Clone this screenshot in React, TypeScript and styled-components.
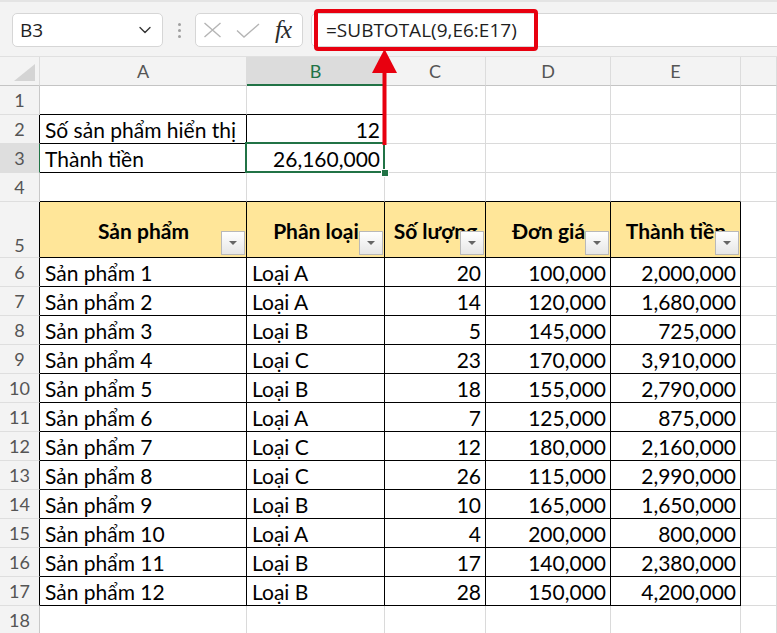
import React from 'react'
import styled, { createGlobalStyle } from 'styled-components'
import { ChevronDown } from 'lucide-react'

const GlobalStyle = createGlobalStyle`
  html, body { margin: 0; padding: 0; background: #fff; }
  body { font-family: Lato, "Liberation Sans", sans-serif; color: #000; }
`

const GRID = '#dadada'
const BLACK = '#000'
const GREEN = '#217346'
const COLS = [40, 207, 138, 101, 125, 130, 36]
const LETTERS = ['A', 'B', 'C', 'D', 'E', '']

const Window = styled.div`
  position: relative;
  width: 777px;
  height: 633px;
  overflow: hidden;
  background: #fff;
`

const FormulaBar = styled.div`
  display: flex;
  align-items: flex-start;
  box-sizing: border-box;
  height: 57px;
  padding: 11px 0 0 12px;
  background: #f3f3f3;
  border-top: 2px solid #e4e4e4;
  border-bottom: 1px solid #e0e0e0;
`

const Field = styled.div<{ $w?: number }>`
  display: flex;
  align-items: center;
  flex: ${p => (p.$w ? 'none' : '1')};
  width: ${p => (p.$w ? `${p.$w}px` : 'auto')};
  height: 34px;
  box-sizing: border-box;
  background: #fff;
  border: 1px solid #d6d6d6;
  border-radius: 5px;
  font-family: "Open Sans", "Noto Sans", sans-serif;
  font-size: 19px;
  color: #1e1e1e;
`

const NameBox = styled(Field)`
  justify-content: space-between;
  padding: 0 7px 0 7px;
`

const Dots = styled.div`
  display: flex;
  flex-direction: column;
  align-items: center;
  justify-content: center;
  gap: 3px;
  width: 32px;
  height: 34px;

  span {
    width: 3px;
    height: 3px;
    border-radius: 50%;
    background: #a0a0a0;
  }
`

const FxBox = styled(Field)`
  padding-left: 7px;
  gap: 14px;
`

const FxLabel = styled.span`
  font-family: "Liberation Serif", "DejaVu Serif", serif;
  font-style: italic;
  font-size: 25px;
  color: #2a2a2a;
  margin-left: 1px;
  letter-spacing: -1px;
`

const FormulaBox = styled(Field)`
  margin-left: 8px;
  margin-right: -12px;
  padding-left: 14px;
`

const Sheet = styled.div`
  display: flex;
  flex-direction: column;
`

const Row = styled.div<{ $h: number }>`
  display: flex;
  height: ${p => p.$h}px;
  flex: none;
`

const ColHead = styled.div<{ $w: number; $selected?: boolean }>`
  flex: none;
  width: ${p => p.$w}px;
  box-sizing: border-box;
  display: flex;
  align-items: center;
  justify-content: center;
  background: ${p => (p.$selected ? '#dcdcdc' : '#f3f3f3')};
  border-right: 1px solid #dcdcdc;
  border-bottom: ${p => (p.$selected ? `2px solid ${GREEN}` : '1px solid #c4c4c4')};
  color: ${p => (p.$selected ? GREEN : '#555')};
  font-size: 18px;
  position: relative;
`

const RowNum = styled.div<{ $right: string; $selected?: boolean }>`
  flex: none;
  width: 40px;
  box-sizing: border-box;
  display: flex;
  align-items: center;
  justify-content: center;
  background: ${p => (p.$selected ? '#dedede' : '#f3f3f3')};
  border-right: 1px solid ${p => p.$right};
  border-bottom: 1px solid #dedede;
  color: #555;
  font-size: 18px;
`

const TallRowNum = styled(RowNum)`
  align-items: flex-end;
  padding-bottom: 1px;
`

const Cell = styled.div<{ $w: number; $r: string; $b: string; $right?: boolean }>`
  flex: none;
  position: relative;
  width: ${p => p.$w}px;
  box-sizing: border-box;
  display: flex;
  align-items: center;
  justify-content: ${p => (p.$right ? 'flex-end' : 'flex-start')};
  padding: 0 4px 0 5px;
  border-right: 1px solid ${p => p.$r};
  border-bottom: 1px solid ${p => p.$b};
  font-size: 21px;
  white-space: nowrap;
`

const HeadCell = styled(Cell)`
  justify-content: center;
  background: #ffe699;
  font-weight: 700;
  padding-top: 1px;
`

const FilterButton = styled.div`
  position: absolute;
  right: 1px;
  bottom: 2px;
  width: 24px;
  height: 24px;
  box-sizing: border-box;
  border: 1px solid #b9b9b9;
  background: linear-gradient(#ffffff, #e6e6e6);
  display: flex;
  align-items: center;
  justify-content: center;

  &::after {
    content: '';
    border-left: 4px solid transparent;
    border-right: 4px solid transparent;
    border-top: 4px solid #666;
  }
`

const Selection = styled.div`
  position: absolute;
  top: -2px;
  left: -2px;
  right: -1px;
  bottom: -1px;
  border: 2px solid ${GREEN};
  pointer-events: none;
  z-index: 2;
`

const FillHandle = styled.div`
  position: absolute;
  right: -5px;
  bottom: -5px;
  width: 6px;
  height: 6px;
  background: ${GREEN};
  border: 1px solid #fff;
  z-index: 3;
`

const RedFrame = styled.div`
  position: absolute;
  left: 314px;
  top: 9px;
  width: 224px;
  height: 42px;
  box-sizing: border-box;
  border: 4px solid #e8000f;
  border-radius: 4px;
  z-index: 5;
`

const Arrow = styled.svg`
  position: absolute;
  left: 370px;
  top: 48px;
  z-index: 5;
`

type Spec = { text?: string; right?: boolean }

const products: [string, number, string, string][] = [
  ['A', 20, '100,000', '2,000,000'],
  ['A', 14, '120,000', '1,680,000'],
  ['B', 5, '145,000', '725,000'],
  ['C', 23, '170,000', '3,910,000'],
  ['B', 18, '155,000', '2,790,000'],
  ['A', 7, '125,000', '875,000'],
  ['C', 12, '180,000', '2,160,000'],
  ['C', 26, '115,000', '2,990,000'],
  ['B', 10, '165,000', '1,650,000'],
  ['A', 4, '200,000', '800,000'],
  ['B', 17, '140,000', '2,380,000'],
  ['B', 28, '150,000', '4,200,000'],
]

const headers = ['Sản phẩm', 'Phân loại', 'Số lượng', 'Đơn giá', 'Thành tiền']

const body: Spec[][] = [
  [],
  [{ text: 'Số sản phẩm hiển thị' }, { text: '12', right: true }],
  [{ text: 'Thành tiền' }, { text: '26,160,000', right: true }],
  [],
  [],
  ...products.map((p, i) => [
    { text: `Sản phẩm ${i + 1}` },
    { text: `Loại ${p[0]}` },
    { text: String(p[1]), right: true },
    { text: p[2], right: true },
    { text: p[3], right: true },
  ]),
  [],
]

const inBox = (r: number, c: number) =>
  (r >= 2 && r <= 3 && c >= 1 && c <= 2) || (r >= 5 && r <= 17 && c >= 1 && c <= 5)

const bottomColor = (r: number, c: number) => (inBox(r, c) || inBox(r + 1, c) ? BLACK : GRID)
const rightColor = (r: number, c: number) => (inBox(r, c) || inBox(r, c + 1) ? BLACK : GRID)

const CornerMark = () => (
  <svg width="22" height="18" style={{ position: 'absolute', right: 3, bottom: 3 }}>
    <polygon points="21,0 21,17 0,17" fill="#d4d4d4" />
  </svg>
)

export default function App() {
  return (
    <Window>
      <GlobalStyle />
      <FormulaBar>
        <NameBox $w={151}>
          <span>B3</span>
          <ChevronDown size={20} strokeWidth={1.6} color="#333" />
        </NameBox>
        <Dots>
          <span />
          <span />
          <span />
        </Dots>
        <FxBox $w={108}>
          <svg width="19" height="16" viewBox="0 0 19 16">
            <path d="M1.5 1 L17.5 15 M17.5 1 L1.5 15" stroke="#b5b5b5" strokeWidth="1.4" fill="none" />
          </svg>
          <svg width="24" height="15" viewBox="0 0 24 15">
            <path d="M1 7.5 L8 14 L23 1" stroke="#b5b5b5" strokeWidth="1.4" fill="none" />
          </svg>
          <FxLabel>fx</FxLabel>
        </FxBox>
        <FormulaBox>=SUBTOTAL(9,E6:E17)</FormulaBox>
      </FormulaBar>

      <Sheet>
        <Row $h={29}>
          {COLS.map((w, i) =>
            i === 0 ? (
              <ColHead key={i} $w={w}>
                <CornerMark />
              </ColHead>
            ) : (
              <ColHead key={i} $w={w} $selected={i === 2}>
                {LETTERS[i - 1]}
              </ColHead>
            ),
          )}
        </Row>

        {body.map((cells, idx) => {
          const r = idx + 1
          const tall = r === 5
          const numRight = r === 3 ? GREEN : inBox(r, 1) ? BLACK : '#c8c8c8'
          return (
            <Row key={r} $h={tall ? 56 : 29}>
              {tall ? (
                <TallRowNum $right={numRight}>{r}</TallRowNum>
              ) : (
                <RowNum $right={numRight} $selected={r === 3}>
                  {r}
                </RowNum>
              )}
              {COLS.slice(1).map((w, j) => {
                const c = j + 1
                if (tall && c <= 5) {
                  return (
                    <HeadCell key={c} $w={w} $r={rightColor(r, c)} $b={bottomColor(r, c)}>
                      {headers[j]}
                      <FilterButton />
                    </HeadCell>
                  )
                }
                const spec = cells[j]
                return (
                  <Cell key={c} $w={w} $r={rightColor(r, c)} $b={bottomColor(r, c)} $right={spec?.right}>
                    {spec?.text}
                    {r === 3 && c === 2 && (
                      <>
                        <Selection />
                        <FillHandle />
                      </>
                    )}
                  </Cell>
                )
              })}
            </Row>
          )
        })}
      </Sheet>

      <RedFrame />
      <Arrow width="30" height="98" viewBox="0 0 30 98">
        <polygon points="14.5,1 2,25 27,25" fill="#e8000f" />
        <rect x="12.5" y="24" width="4" height="73" fill="#e8000f" />
      </Arrow>
    </Window>
  )
}
